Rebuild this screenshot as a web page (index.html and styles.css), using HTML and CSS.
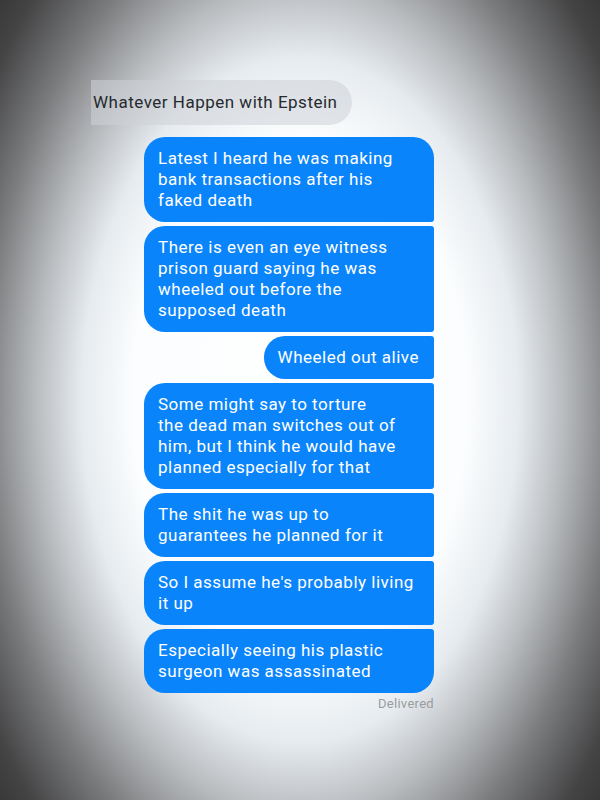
FILE: index.html
```html
<!DOCTYPE html>
<html>
<head>
<meta charset="utf-8">
<link rel="stylesheet" href="styles.css">
</head>
<body>
<div class="screen">
  <div class="thread">
    <div class="row received">
      <div class="bubble gray">Whatever Happen with Epstein</div>
    </div>
    <div class="group">
      <div class="bubble blue first">Latest I heard he was making<br>bank transactions after his<br>faked death</div>
      <div class="bubble blue">There is even an eye witness<br>prison guard saying he was<br>wheeled out before the<br>supposed death</div>
      <div class="bubble blue">Wheeled out alive</div>
      <div class="bubble blue">Some might say to torture<br>the dead man switches out of<br>him, but I think he would have<br>planned especially for that</div>
      <div class="bubble blue">The shit he was up to<br>guarantees he planned for it</div>
      <div class="bubble blue">So I assume he's probably living<br>it up</div>
      <div class="bubble blue last">Especially seeing his plastic<br>surgeon was assassinated</div>
      <div class="status">Delivered</div>
    </div>
  </div>
</div>
</body>
</html>
```

FILE: styles.css
```css
html, body {
  margin: 0;
  padding: 0;
}
body {
  width: 600px;
  height: 800px;
  overflow: hidden;
  font-family: Roboto, "Noto Sans", sans-serif;
}
.screen {
  width: 600px;
  height: 800px;
  background: radial-gradient(ellipse 420px 660px at 50% 50%, #ffffff 0%, #fbfdfe 40%, #e6ebef 52%, #b8bbbe 63%, #7c7d7f 75%, #444445 88%, #2c2c2c 100%);
  box-sizing: border-box;
  padding-top: 80px;
}
.thread {
  display: flex;
  flex-direction: column;
}
.row.received {
  padding-left: 91px;
  display: flex;
}
.bubble {
  font-size: 17px;
  line-height: 21px;
  letter-spacing: 0.5px;
  white-space: nowrap;
}
.gray {
  background: rgba(205, 210, 215, 0.55);
  color: #262a2e;
  height: 45px;
  box-sizing: border-box;
  padding: 0 14px 0 2px;
  display: flex;
  align-items: center;
  border-radius: 0 23px 23px 0;
}
.group {
  margin-top: 12px;
  display: flex;
  flex-direction: column;
  align-items: flex-end;
  gap: 4px;
  padding-right: 166px;
}
.blue {
  background: #0a84fb;
  color: #ffffff;
  padding: 11px 15px 11px 14px;
  border-radius: 21px 3px 3px 21px;
  width: fit-content;
  box-sizing: border-box;
}
.blue.first {
  border-top-right-radius: 21px;
}
.blue.last {
  border-bottom-right-radius: 21px;
}
.group .blue:not(:nth-child(3)) {
  width: 290px;
}
.status {
  font-size: 13px;
  letter-spacing: 0.3px;
  color: #9a9c9f;
  margin-top: -1px;
}
```
